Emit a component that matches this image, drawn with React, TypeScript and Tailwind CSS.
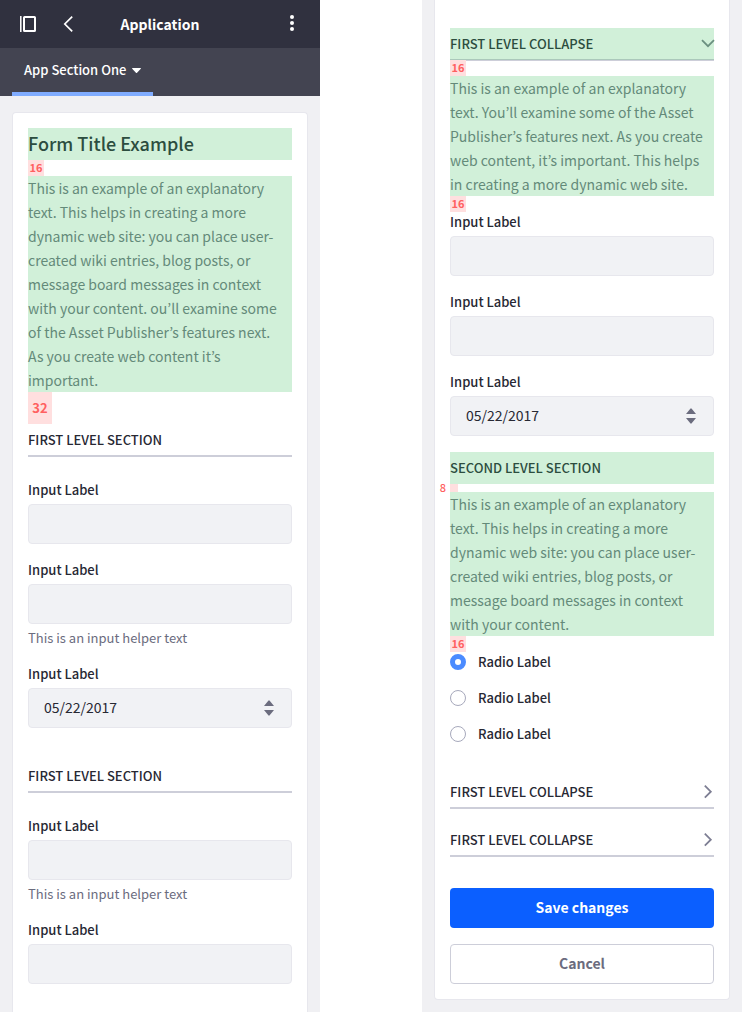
import React, { useId, useState } from "react";

function Gap({ size }: { size: 16 | 32 }) {
  return size === 16 ? (
    <div className="h-4 w-4 bg-[#ffdfdf] text-center text-[11px] leading-[14px] font-bold text-[#ff6060]">16</div>
  ) : (
    <div className="h-8 w-6 bg-[#ffdfdf] text-center text-[13px] leading-8 font-bold text-[#ff6060]">32</div>
  );
}

function SectionTitle({ children }: { children: React.ReactNode }) {
  return (
    <h2 className="h-8 border-b border-[#cdced9] text-[13px] leading-8 font-medium text-[#272833] uppercase shadow-[0_1px_0_#cdced9]">
      {children}
    </h2>
  );
}

function Collapse({ title, open = false }: { title: string; open?: boolean }) {
  return (
    <h2>
      <button
        type="button"
        aria-expanded={open}
        className={
          open
            ? "flex h-8 w-full items-center justify-between border-b border-[#abc8bb] bg-[#d1f0d9] text-[13px] font-medium text-[#2c4d3f] uppercase shadow-[0_1px_0_#cdced9]"
            : "flex h-8 w-full items-center justify-between border-b border-[#cdced9] text-[13px] font-medium text-[#272833] uppercase shadow-[0_1px_0_#cdced9]"
        }
      >
        {title}
        {open ? (
          <svg className="h-3 w-3 shrink-0 overflow-visible" viewBox="0 0 12 12" fill="none" stroke="#6b9080" strokeWidth="1.8">
            <path d="M0 2.200l6 6 6-6" />
          </svg>
        ) : (
          <svg className="h-3 w-3 shrink-0 overflow-visible" viewBox="0 0 12 12" fill="none" stroke="#7d7e93" strokeWidth="1.8">
            <path d="M2.800-.3l6 6-6 6" />
          </svg>
        )}
      </button>
    </h2>
  );
}

function Label({ id }: { id: string }) {
  return (
    <label htmlFor={id} className="mb-1 block text-[13px] leading-5 font-medium text-[#272833]">
      Input Label
    </label>
  );
}

function TextField({ helper }: { helper?: string }) {
  const id = useId();
  return (
    <div>
      <Label id={id} />
      <input id={id} type="text" className="block h-10 w-full rounded border border-[#e7e7ed] bg-[#f1f2f5] px-[15px] text-sm text-[#272833]" />
      {helper && <p className="mt-1 text-[13px] leading-5 text-[#6b6c7e]">{helper}</p>}
    </div>
  );
}

function DateField() {
  const id = useId();
  return (
    <div>
      <Label id={id} />
      <div className="relative">
        <select id={id} className="block h-10 w-full appearance-none rounded border border-[#e7e7ed] bg-[#f1f2f5] px-[15px] pb-0.5 text-sm text-[#272833]">
          <option>05/22/2017</option>
        </select>
        <svg className="pointer-events-none absolute top-3 right-[18px] h-4 w-[10px]" viewBox="0 0 10 16" fill="#6b6c7e">
          <path d="M0 6L4.3.8a.9.9 0 0 1 1.4 0L10 6zM0 10l4.3 5.2a.9.9 0 0 0 1.4 0L10 10z" />
        </svg>
      </div>
    </div>
  );
}

function Explanation({ lines }: { lines: string[] }) {
  return (
    <p className="bg-[#d1f0d9] text-sm leading-6 whitespace-nowrap text-[#648a79]">
      {lines.map((line) => (
        <span key={line} className="block">
          {line}{" "}
        </span>
      ))}
    </p>
  );
}

function RadioGroup() {
  const [selected, setSelected] = useState(0);
  return (
    <div className="flex flex-col gap-4">
      {[0, 1, 2].map((i) => (
        <label key={i} className="flex h-5 items-center gap-3 text-[13px] leading-5 font-medium text-[#272833]">
          <input
            type="radio"
            name="option"
            checked={selected === i}
            onChange={() => setSelected(i)}
            className="h-4 w-4 appearance-none rounded-full border border-[#a7a9bc] bg-white checked:border-5 checked:border-[#4b8bff]"
          />
          Radio Label
        </label>
      ))}
    </div>
  );
}

function Header() {
  return (
    <header>
      <div className="grid h-12 grid-cols-[1fr_auto_1fr] items-center bg-[#30313f] px-5 text-white">
        <div className="flex items-center gap-7">
          <button type="button" aria-label="Toggle panel">
            <svg className="h-4 w-4" viewBox="0 0 16 16" fill="none" stroke="currentColor">
              <path d="M.8 0v16" strokeWidth="1.5" />
              <rect x="4" y="1" width="11" height="14" rx=".6" strokeWidth="2" />
            </svg>
          </button>
          <button type="button" aria-label="Back">
            <svg className="h-4 w-2 overflow-visible" viewBox="0 0 8 16" fill="none" stroke="currentColor" strokeWidth="1.7">
              <path d="M8.200.6L.8 8l7.400 7.400" />
            </svg>
          </button>
        </div>
        <h1 className="text-sm leading-6 font-bold">Application</h1>
        <button type="button" aria-label="More actions" className="mr-1.5 mb-0.5 justify-self-end">
          <svg className="h-4 w-1" viewBox="0 0 4 16" fill="currentColor">
            <circle cx="2" cy="2" r="2" />
            <circle cx="2" cy="8" r="2" />
            <circle cx="2" cy="14" r="2" />
          </svg>
        </button>
      </div>
      <nav className="flex h-12 bg-[#434451] px-3">
        <button type="button" className="flex items-center gap-1.5 border-b-4 border-[#80acff] px-3 text-[13px] font-medium text-white">
          App Section One
          <svg className="h-[5px] w-[9px]" viewBox="0 0 10 6" preserveAspectRatio="none" fill="currentColor">
            <path d="M.6 0h8.800c.5 0 .7.6.4.9L5.600 5.700a.9.9 0 0 1-1.200 0L.2.9C-.1.6.1 0 .6 0z" />
          </svg>
        </button>
      </nav>
    </header>
  );
}

export default function App() {
  return (
    <div className="grid min-h-screen grid-cols-[320fr_102fr_320fr] bg-white font-['Noto_Sans_CJK_KR','Noto_Sans',sans-serif]">
      <section className="col-start-1 flex min-w-0 flex-col bg-[#f0f0f3]">
        <Header />
        <form className="mx-3 mt-4 flex-1 rounded-t border border-b-0 border-[#e7e7ed] bg-white p-[15px]">
          <h2 className="bg-[#d1f0d9] pb-0.5 text-lg leading-[30px] font-medium text-[#2c4d3f]">Form Title Example</h2>
          <Gap size={16} />
          <Explanation
            lines={[
              "This is an example of an explanatory",
              "text. This helps in creating a more",
              "dynamic web site: you can place user-",
              "created wiki entries, blog posts, or",
              "message board messages in context",
              "with your content. ou’ll examine some",
              "of the Asset Publisher’s features next.",
              "As you create web content it’s",
              "important.",
            ]}
          />
          <Gap size={32} />
          <SectionTitle>First level section</SectionTitle>
          <div className="mt-6 mb-8 flex flex-col gap-4">
            <TextField />
            <TextField helper="This is an input helper text" />
            <DateField />
          </div>
          <SectionTitle>First level section</SectionTitle>
          <div className="mt-6 flex flex-col gap-4">
            <TextField helper="This is an input helper text" />
            <TextField />
          </div>
        </form>
      </section>

      <section className="col-start-3 min-w-0 bg-[#f0f0f3] px-3 pb-3">
        <form className="rounded-b border border-t-0 border-[#e7e7ed] bg-white px-[15px] pt-7 pb-[15px]">
          <Collapse title="First level collapse" open />
          <Gap size={16} />
          <Explanation
            lines={[
              "This is an example of an explanatory",
              "text. You’ll examine some of the Asset",
              "Publisher’s features next. As you create",
              "web content, it’s important. This helps",
              "in creating a more dynamic web site.",
            ]}
          />
          <Gap size={16} />
          <div className="mb-4 flex flex-col gap-4">
            <TextField />
            <TextField />
            <DateField />
          </div>
          <h3 className="bg-[#d1f0d9] text-[13px] leading-8 font-medium text-[#2c4d3f] uppercase">Second level section</h3>
          <div className="relative h-2 w-2 bg-[#ffdfdf]">
            <span className="absolute right-3 -top-1 text-[11px] leading-[14px] font-medium text-[#ff6060]">8</span>
          </div>
          <Explanation
            lines={[
              "This is an example of an explanatory",
              "text. This helps in creating a more",
              "dynamic web site: you can place user-",
              "created wiki entries, blog posts, or",
              "message board messages in context",
              "with your content.",
            ]}
          />
          <Gap size={16} />
          <RadioGroup />
          <div className="my-8 flex flex-col gap-4">
            <Collapse title="First level collapse" />
            <Collapse title="First level collapse" />
          </div>
          <div className="flex flex-col gap-4">
            <button type="submit" className="h-10 w-full rounded bg-[#0b5fff] pb-0.5 text-sm font-bold text-white">Save changes</button>
            <button type="button" className="h-10 w-full rounded border border-[#cdced9] bg-white pb-0.5 text-sm font-bold text-[#6b6c7e]">Cancel</button>
          </div>
        </form>
      </section>
    </div>
  );
}
